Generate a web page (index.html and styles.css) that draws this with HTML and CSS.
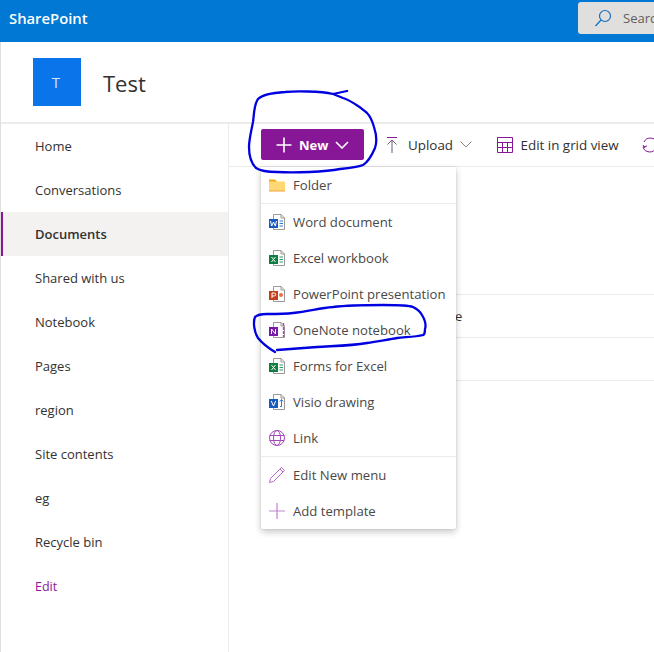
FILE: index.html
```html
<!DOCTYPE html>
<html lang="en">
<head>
<meta charset="utf-8">
<title>SharePoint - Test</title>
<link rel="stylesheet" href="styles.css">
</head>
<body>
<svg class="defs" width="0" height="0">
  <defs>
    <g id="page">
      <path d="M4.5 .5H12L15.5 4V15.5H4.5Z" fill="#fff" stroke="#9b9896"/>
      <path d="M12 .5V4H15.5" fill="none" stroke="#9b9896"/>
    </g>
  </defs>
</svg>
<header class="topbar">
  <span class="brand">SharePoint</span>
  <div class="search">
    <svg class="search-icon" width="18" height="18" viewBox="0 0 18 18"><circle cx="11" cy="7" r="5.5" fill="none" stroke="#106ebe" stroke-width="1.2"/><path d="M7 11L1.5 17" stroke="#106ebe" stroke-width="1.2"/></svg>
    <span class="search-text">Search</span>
  </div>
</header>
<div class="page">
  <div class="site">
    <div class="logo">T</div>
    <h1 class="title">Test</h1>
  </div>
  <div class="body">
    <nav class="nav">
      <a class="nav-item">Home</a>
      <a class="nav-item">Conversations</a>
      <a class="nav-item active">Documents</a>
      <a class="nav-item">Shared with us</a>
      <a class="nav-item">Notebook</a>
      <a class="nav-item">Pages</a>
      <a class="nav-item">region</a>
      <a class="nav-item">Site contents</a>
      <a class="nav-item">eg</a>
      <a class="nav-item">Recycle bin</a>
      <a class="nav-item edit">Edit</a>
    </nav>
    <main class="content">
      <div class="commands">
        <button class="new-btn">
          <svg width="16" height="16" viewBox="0 0 16 16"><path d="M8 .5V15.5M.5 8H15.5" stroke="#fff" stroke-width="1.6"/></svg>
          <span class="new-label">New</span>
          <svg width="14" height="8" viewBox="0 0 14 8"><path d="M1 1L7 7L13 1" fill="none" stroke="#fff" stroke-width="1.6"/></svg>
        </button>
        <div class="cmd upload">
          <svg width="12" height="16" viewBox="0 0 12 16"><path d="M1 .5H11" stroke="#881798"/><path d="M6 3V16M1.5 7.5L6 3L10.5 7.5" fill="none" stroke="#6b5a75"/></svg>
          <span>Upload</span>
          <svg class="caret" width="12" height="7" viewBox="0 0 12 7"><path d="M.5 .5L6 6L11.5 .5" fill="none" stroke="#8a8886"/></svg>
        </div>
        <div class="cmd grid">
          <svg width="16" height="16" viewBox="0 0 16 16"><path d="M.5 .5H15.5V15.5H.5ZM.5 5.5H15.5M.5 10.5H15.5M5.5 5.5V15.5M10.5 5.5V15.5" fill="none" stroke="#881798"/></svg>
          <span>Edit in grid view</span>
        </div>
        <div class="cmd sync">
          <svg width="16" height="16" viewBox="0 0 16 16"><path d="M2 5A7 7 0 0 1 15 6M14 11A7 7 0 0 1 1 10" fill="none" stroke="#881798"/><path d="M1 8L3 11M1 10L5 9" fill="none" stroke="#881798"/></svg>
        </div>
      </div>
      <section class="list">
        <div class="row"><span class="col-name">Name</span></div>
        <div class="row"></div>
      </section>
      <div class="menu">
        <div class="menu-item"><svg class="ico" width="18" height="18" viewBox="0 0 18 18"><path d="M1 3.5H7L9 5.5V6H1Z" fill="#f2a90f"/><path d="M1 5.5H17V15H1Z" fill="#ffd875"/><path d="M1 14.5H17V15.5H1Z" fill="#f2a33a"/></svg><span>Folder</span></div>
        <div class="sep"></div>
        <div class="menu-item"><svg class="ico" width="18" height="18" viewBox="0 0 18 18"><use href="#page" transform="translate(1 1)"/><path d="M1 6H10V15H1Z" fill="#185abd"/><path d="M2.5 8L3.7 13L5.5 9L7.3 13L8.5 8" fill="none" stroke="#fff"/><path d="M11.5 8H15M11.5 10.5H15M11.5 13H15" stroke="#2b7cd3"/></svg><span>Word document</span></div>
        <div class="menu-item"><svg class="ico" width="18" height="18" viewBox="0 0 18 18"><use href="#page" transform="translate(1 1)"/><path d="M1 6H10V15H1Z" fill="#107c41"/><path d="M3.5 8L7.5 13M7.5 8L3.5 13" fill="none" stroke="#fff"/><path d="M11.5 8H15M11.5 10.5H15M11.5 13H15" stroke="#21a366"/></svg><span>Excel workbook</span></div>
        <div class="menu-item"><svg class="ico" width="18" height="18" viewBox="0 0 18 18"><use href="#page" transform="translate(1 1)"/><path d="M1 6H10V15H1Z" fill="#c43e1c"/><path d="M4 13V8H6.2A1.5 1.5 0 0 1 6.2 11H4" fill="none" stroke="#fff"/><circle cx="13" cy="10" r="2" fill="#ed6c47"/></svg><span>PowerPoint presentation</span></div>
        <div class="menu-item"><svg class="ico" width="18" height="18" viewBox="0 0 18 18"><use href="#page" transform="translate(1 1)"/><path d="M1 6H10V15H1Z" fill="#7719aa"/><path d="M3.5 13V8L7.5 13V8" fill="none" stroke="#fff"/><path d="M15.5 2V16" stroke="#ba3bd0" stroke-width="1.4" stroke-dasharray="3 1"/></svg><span>OneNote notebook</span></div>
        <div class="menu-item"><svg class="ico" width="18" height="18" viewBox="0 0 18 18"><use href="#page" transform="translate(1 1)"/><path d="M1 6H10V15H1Z" fill="#107c41"/><path d="M3.5 8L7.5 13M7.5 8L3.5 13" fill="none" stroke="#fff"/><path d="M11.5 8H15M11.5 10.5H15M11.5 13H15" stroke="#21a366"/></svg><span>Forms for Excel</span></div>
        <div class="menu-item"><svg class="ico" width="18" height="18" viewBox="0 0 18 18"><use href="#page" transform="translate(1 1)"/><path d="M1 6H10V15H1Z" fill="#185abd"/><path d="M3.3 8L5.5 13L7.7 8" fill="none" stroke="#fff"/><path d="M12 13.5H13.5V6.5M11.8 8.5L13.5 6.5L15.2 8.5" fill="none" stroke="#2b7cd3"/></svg><span>Visio drawing</span></div>
        <div class="menu-item"><svg class="ico" width="18" height="18" viewBox="0 0 18 18"><g fill="none" stroke="#a349b8"><circle cx="9" cy="9" r="7.5"/><ellipse cx="9" cy="9" rx="3.5" ry="7.5"/><path d="M1.8 6.5H16.2M1.8 11.5H16.2"/></g></svg><span>Link</span></div>
        <div class="sep"></div>
        <div class="menu-item"><svg class="ico" width="18" height="18" viewBox="0 0 18 18"><path d="M2.5 12.5L13.5 1.5L16.5 4.5L5.5 15.5L1.5 16.5ZM12 3L15 6" fill="none" stroke="#b869c9"/></svg><span>Edit New menu</span></div>
        <div class="menu-item"><svg class="ico" width="18" height="18" viewBox="0 0 18 18"><path d="M9 1V17M1 9H17" stroke="#c283d0" stroke-width="1.2"/></svg><span>Add template</span></div>
      </div>
    </main>
  </div>
</div>
<svg class="ink" width="654" height="652" viewBox="0 0 654 652">
  <path d="M347 91L333 94C320 91 295 91 285 92C270 93 262 95 258 99C254 104 254 115 253 122C251 132 249 140 249 147C249 155 251 163 256 168C262 172 270 172 277 172C295 173 325 172 340 169C350 168 358 167 363 165C368 162 372 155 375 148C377 142 376 133 374 127C372 120 370 116 367 113C362 109 360 107 358 106C352 102 347 99 343 98L333 94"/>
  <path d="M275 352C270 349 262 343 258 338C254 332 253 322 255 317C258 314 262 314 267 314C280 314 285 314 293 313C310 311 320 308 333 307C350 305 370 305 383 305C395 305 408 305 413 307C419 310 421 313 422 315C425 320 426 326 425 329C425 333 424 335 423 335C415 337 405 337 397 338C385 340 375 342 367 343C350 346 330 346 317 347L277 350"/>
</svg>
</body>
</html>
```
FILE: styles.css
```css
html, body {
  margin: 0;
  height: 652px;
  overflow: hidden;
  background: #fff;
}
body {
  position: relative;
  font-family: "Open Sans", "Noto Sans", sans-serif;
  font-size: 13px;
  color: #323130;
}
.defs { position: absolute; }
.topbar {
  height: 42px;
  background: #0078d4;
  display: flex;
  justify-content: space-between;
  align-items: flex-start;
}
.brand {
  margin: 8px 0 0 9px;
  color: #fff;
  font-size: 14.8px;
  line-height: 20px;
  font-weight: 600;
}
.search {
  margin-top: 2px;
  width: 76px;
  height: 32px;
  flex: none;
  box-sizing: border-box;
  padding-left: 16px;
  display: flex;
  align-items: center;
  gap: 11px;
  background: #e1dfdd;
  border-radius: 3px 0 0 3px;
  overflow: hidden;
}
.search-icon { flex: none; }
.search-text { color: #605e5c; white-space: nowrap; }
.page {
  height: 610px;
  border-left: 1px solid #e1dfdd;
  display: flex;
  flex-direction: column;
}
.site {
  flex: none;
  box-sizing: border-box;
  padding: 16px 0 0 32px;
  display: flex;
  align-items: flex-start;
  gap: 22px;
  border-bottom: 2px solid #edebe9;
  height: 82px;
}
.logo {
  width: 48px;
  height: 48px;
  box-sizing: border-box;
  padding-right: 2px;
  background: #0a75ea;
  color: #d5e6fb;
  font-size: 15px;
  display: flex;
  align-items: center;
  justify-content: center;
}
.title {
  margin: 7px 0 0;
  font-size: 22px;
  line-height: 36px;
  font-weight: 500;
  color: #323130;
}
.body {
  flex: 1;
  display: flex;
  min-height: 0;
}
.nav {
  width: 227px;
  flex: none;
  border-right: 1px solid #edebe9;
  display: flex;
  flex-direction: column;
}
.nav-item {
  height: 44px;
  flex: none;
  box-sizing: border-box;
  padding-left: 34px;
  display: flex;
  align-items: center;
}
.nav-item.active {
  background: #f3f2f1;
  font-weight: 600;
  border-left: 2px solid #881798;
  padding-left: 32px;
}
.nav-item.edit { color: #881798; font-size: 12.5px; }
.content {
  flex: 1;
  min-width: 0;
  position: relative;
  overflow: hidden;
}
.commands {
  height: 43px;
  box-sizing: border-box;
  padding: 5px 0 0 32px;
  display: flex;
  align-items: flex-start;
  border-bottom: 1px solid #edebe9;
  white-space: nowrap;
}
.new-btn {
  width: 103px;
  height: 31px;
  flex: none;
  border: 0;
  border-radius: 2px;
  background: #881798;
  color: #fff;
  font: inherit;
  font-weight: 700;
  padding: 0 0 0 15px;
  display: flex;
  align-items: center;
}
.new-label { margin: 0 7px 0 7px; }
.cmd {
  height: 31px;
  flex: none;
  display: flex;
  align-items: center;
  font-size: 13.4px;
}
.upload { margin-left: 22px; gap: 10px; }
.caret { margin-left: -3px; }
.grid { margin-left: 24.5px; gap: 8px; }
.sync { margin-left: 23px; }
.list {
  margin-left: 32px;
  padding-top: 127px;
}
.row {
  height: 43px;
  box-sizing: border-box;
  border-top: 1px solid #edebe9;
  display: flex;
  align-items: center;
  padding-left: 165px;
}
.row:last-child { border-bottom: 1px solid #edebe9; height: 44px; }
.menu {
  position: absolute;
  left: 32px;
  top: 43px;
  width: 195px;
  background: #fff;
  box-shadow: 0 3px 7px rgba(0, 0, 0, .22), 0 0 2px rgba(0, 0, 0, .12);
  border-radius: 0 0 2px 2px;
  color: #4a4847;
  font-size: 13.15px;
}
.menu-item {
  height: 36px;
  box-sizing: border-box;
  padding-left: 7px;
  display: flex;
  align-items: center;
  gap: 7px;
  white-space: nowrap;
}
.ico { flex: none; }
.sep {
  height: 1px;
  background: #edebe9;
}
.ink {
  position: absolute;
  left: 0;
  top: 0;
  pointer-events: none;
}
.ink path {
  fill: none;
  stroke: #0000e0;
  stroke-width: 2.3;
  stroke-linejoin: round;
  stroke-linecap: round;
}
```
